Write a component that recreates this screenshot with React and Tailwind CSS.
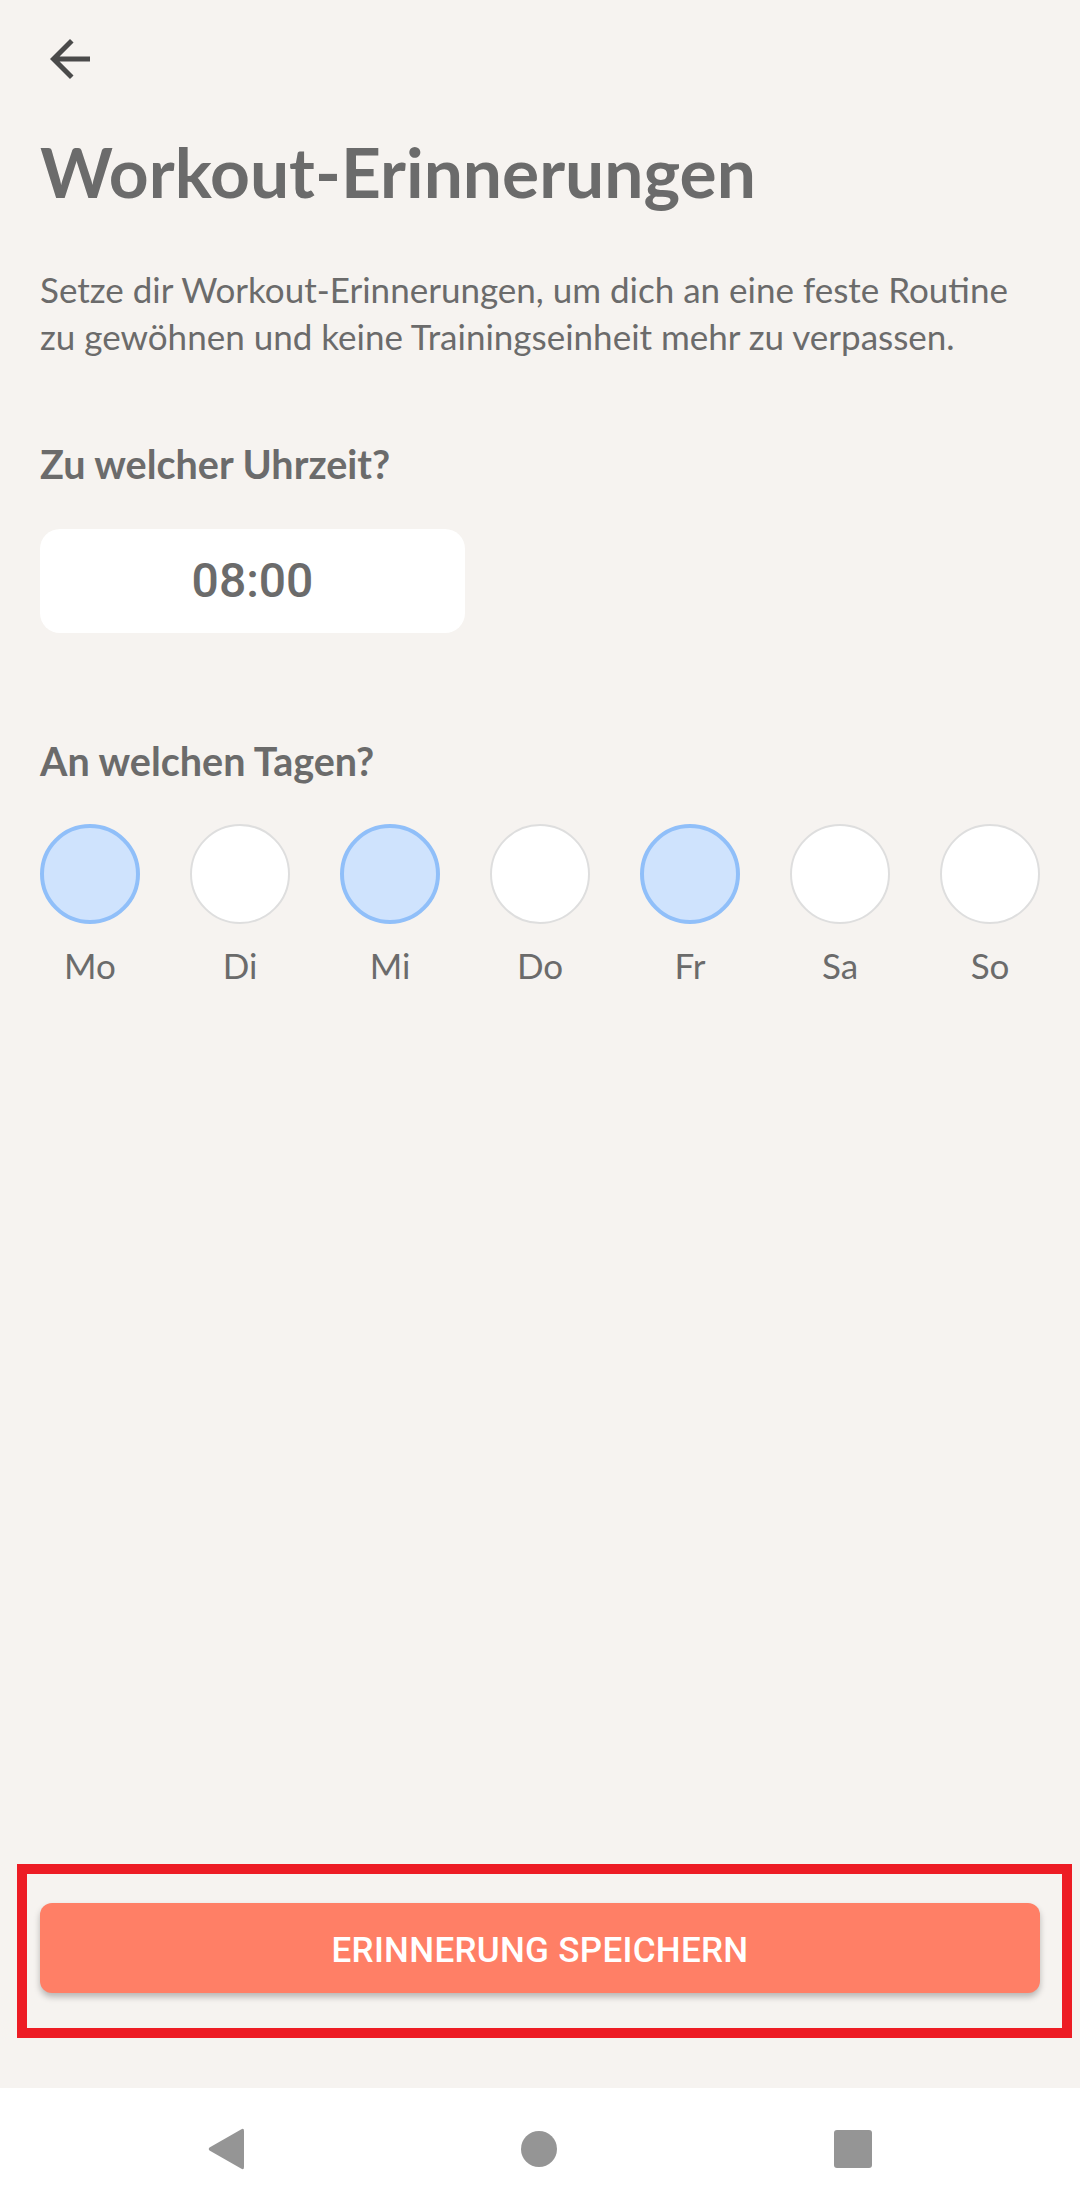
import React, { useState } from 'react';

const DAYS = [
  { key: 'mo', label: 'Mo', on: true },
  { key: 'di', label: 'Di', on: false },
  { key: 'mi', label: 'Mi', on: true },
  { key: 'do', label: 'Do', on: false },
  { key: 'fr', label: 'Fr', on: true },
  { key: 'sa', label: 'Sa', on: false },
  { key: 'so', label: 'So', on: false },
];

function BackArrow() {
  return (
    <svg viewBox="0 0 24 24" className="w-[60px] h-[60px] fill-[#4a4a4a]">
      <path d="M20 11H7.83l5.59-5.59L12 4l-8 8 8 8 1.41-1.41L7.83 13H20v-2z" />
    </svg>
  );
}

export default function App() {
  const [days, setDays] = useState(DAYS);

  const toggleDay = (key) => {
    setDays((prev) => prev.map((d) => (d.key === key ? { ...d, on: !d.on } : d)));
  };

  return (
    <div className="flex flex-col h-[2209px] w-full bg-[#f6f3f0] font-['Lato',sans-serif] text-[#6b6b6b]">
      <div className="flex-1 flex flex-col px-[40px]">
        {/* Top bar */}
        <div className="pt-[29px]">
          <BackArrow />
        </div>

        <h1 className="mt-[41px] text-[69.5px] font-bold leading-[1.2]">Workout-Erinnerungen</h1>

        <p className="mt-[53px] text-[35px] leading-[47px]">
          Setze dir Workout-Erinnerungen, um dich an eine feste Routine zu gewöhnen und keine Trainingseinheit mehr zu verpassen.
        </p>

        {/* Time */}
        <h2 className="mt-[80px] text-[39.5px] font-bold leading-[1.2]">Zu welcher Uhrzeit?</h2>
        <div className="mt-[41px] w-[425px] h-[104px] rounded-[20px] bg-white flex items-center justify-center">
          <span className="font-['Roboto',sans-serif] font-medium text-[48px]">08:00</span>
        </div>

        {/* Days */}
        <h2 className="mt-[104px] text-[39.5px] font-bold leading-[1.2]">An welchen Tagen?</h2>
        <div className="mt-[40px] flex justify-between">
          {days.map((d) => (
            <button key={d.key} onClick={() => toggleDay(d.key)} className="flex flex-col items-center w-[100px] cursor-pointer">
              <span
                className={
                  d.on
                    ? 'w-[100px] h-[100px] rounded-full bg-[#cfe3fd] border-[4px] border-[#90bff9]'
                    : 'w-[100px] h-[100px] rounded-full bg-white border-[2px] border-[#dedede]'
                }
              />
              <span className="mt-[20px] text-[35px] leading-[1.2]">{d.label}</span>
            </button>
          ))}
        </div>

        <div className="flex-1" />

        {/* Save button (highlighted) */}
        <div className="-ml-[23px] -mr-[32px] mb-[50px] border-[10px] border-[#ed1c24] pl-[13px] pr-[22px] pt-[29px] pb-[35px]">
          <button className="w-full h-[90px] pt-[6px] rounded-[12px] bg-[#ff7f66] shadow-[0_4px_6px_rgba(0,0,0,0.25)] text-white font-['Roboto',sans-serif] font-medium text-[35px] tracking-[0.3px]">
            ERINNERUNG SPEICHERN
          </button>
        </div>
      </div>

      {/* Android nav bar */}
      <div className="h-[121px] bg-white flex items-center justify-center gap-[277px]">
        <svg viewBox="0 0 36 42" className="w-[36px] h-[42px] fill-[#959595]">
          <path d="M33 1.5 Q36 -0.5 36 3 V39 Q36 42.5 33 40.5 L1.5 22.5 Q0 21 1.5 19.5 Z" />
        </svg>
        <span className="w-[36px] h-[36px] rounded-full bg-[#959595]" />
        <span className="w-[38px] h-[38px] rounded-[3px] bg-[#959595]" />
      </div>
    </div>
  );
}
